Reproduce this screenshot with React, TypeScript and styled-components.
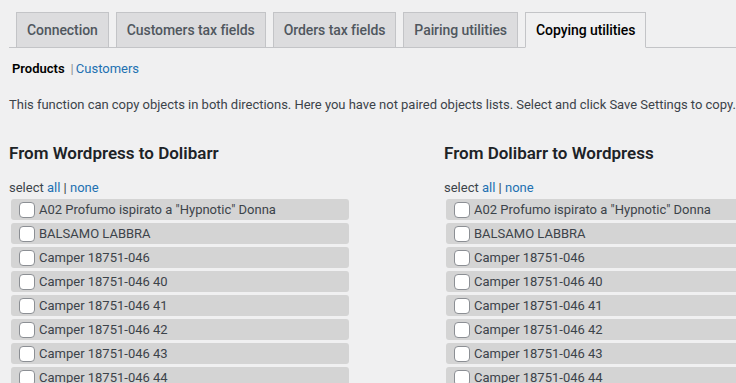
import styled, { createGlobalStyle } from "styled-components";

const GlobalStyle = createGlobalStyle`
  html, body {
    margin: 0;
    padding: 0;
    background: #f0f0f1;
    overflow: hidden;
  }
  body {
    font-family: Roboto, "Liberation Sans", sans-serif;
    font-size: 13px;
    color: #3c434a;
  }
`;

const Page = styled.div`
  width: 900px;
  padding-left: 9px;
`;

const TabBar = styled.nav`
  display: flex;
  padding-top: 12px;
  border-bottom: 1px solid #c3c4c7;
`;

const Tab = styled.a<{ $active?: boolean }>`
  margin-left: 7px;
  margin-bottom: -1px;
  padding: 5px 10px;
  font-size: 14px;
  line-height: 24px;
  font-weight: 500;
  letter-spacing: -0.07px;
  border: 1px solid #c3c4c7;
  border-bottom-color: ${(p) => (p.$active ? "#f0f0f1" : "#c3c4c7")};
  background: ${(p) => (p.$active ? "#f0f0f1" : "#dcdcde")};
  color: ${(p) => (p.$active ? "#000" : "#50575e")};
  text-decoration: none;
  white-space: nowrap;
`;

const SubNav = styled.ul`
  display: flex;
  align-items: center;
  list-style: none;
  margin: 11px 0 0 3px;
  padding: 0;
  line-height: 20px;
  color: #646970;
`;

const SubItem = styled.li<{ $current?: boolean }>`
  font-weight: ${(p) => (p.$current ? 600 : 400)};
  color: ${(p) => (p.$current ? "#000" : "#2271b1")};
`;

const Sep = styled.span`
  margin: 0 2px 0 6px;
  color: #8c8f94;
`;

const Intro = styled.p`
  margin: 16px 0 0;
  line-height: 20px;
  white-space: nowrap;
  letter-spacing: -0.02px;
`;

const Columns = styled.div`
  display: grid;
  grid-template-columns: 435px 435px;
  margin-top: 27px;
`;

const Column = styled.section``;

const Heading = styled.h2`
  margin: 0;
  font-size: 17px;
  line-height: 22px;
  font-weight: 600;
  color: #1d2327;
`;

const SelectLine = styled.div`
  margin-top: 14px;
  line-height: 20px;
`;

const Link = styled.a`
  color: #2271b1;
  text-decoration: none;
`;

const List = styled.div`
  display: flex;
  flex-direction: column;
  gap: 3px;
  margin: 1px 0 0 2px;
`;

const Row = styled.label`
  display: flex;
  align-items: center;
  gap: 4px;
  width: 330px;
  height: 21px;
  padding-left: 8px;
  border-radius: 3px;
  background: #d4d4d4;
  line-height: 21px;
`;

const Box = styled.span`
  box-sizing: border-box;
  width: 16px;
  height: 16px;
  border: 1px solid #8c8f94;
  border-radius: 4px;
  background: #fff;
  flex: none;
`;

const items = [
  'A02 Profumo ispirato a "Hypnotic" Donna',
  "BALSAMO LABBRA",
  "Camper 18751-046",
  "Camper 18751-046 40",
  "Camper 18751-046 41",
  "Camper 18751-046 42",
  "Camper 18751-046 43",
  "Camper 18751-046 44",
];

const tabs = [
  "Connection",
  "Customers tax fields",
  "Orders tax fields",
  "Pairing utilities",
  "Copying utilities",
];

const CopyList = ({ title }: { title: string }) => (
  <Column>
    <Heading>{title}</Heading>
    <SelectLine>
      select <Link>all</Link> | <Link>none</Link>
    </SelectLine>
    <List>
      {items.map((item) => (
        <Row key={item}>
          <Box />
          {item}
        </Row>
      ))}
    </List>
  </Column>
);

const App = () => (
  <>
    <GlobalStyle />
    <Page>
      <TabBar>
        {tabs.map((t) => (
          <Tab key={t} $active={t === "Copying utilities"}>
            {t}
          </Tab>
        ))}
      </TabBar>
      <SubNav>
        <SubItem $current>Products</SubItem>
        <Sep>|</Sep>
        <SubItem>Customers</SubItem>
      </SubNav>
      <Intro>
        This function can copy objects in both directions. Here you have not
        paired objects lists. Select and click Save Settings to copy.
      </Intro>
      <Columns>
        <CopyList title="From Wordpress to Dolibarr" />
        <CopyList title="From Dolibarr to Wordpress" />
      </Columns>
    </Page>
  </>
);

export default App;
